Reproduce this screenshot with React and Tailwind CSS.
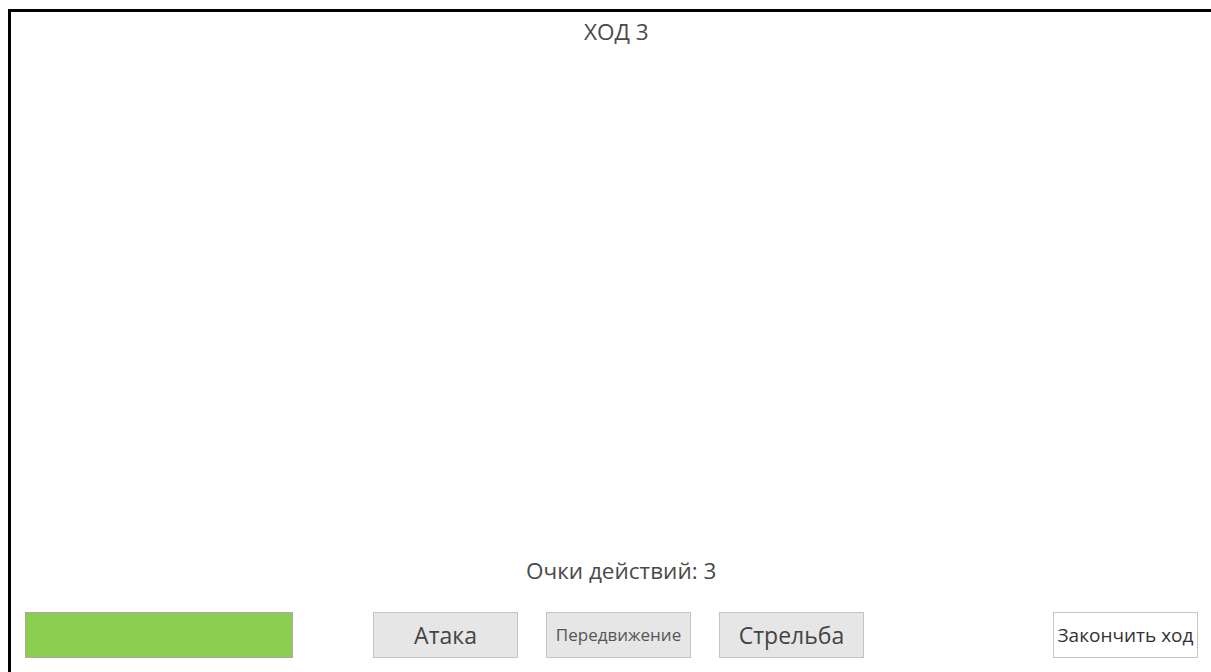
export default function App() {
  const font = { fontFamily: '"Open Sans", "Noto Sans", sans-serif' };

  return (
    <div className="w-[1211px] h-[672px] overflow-hidden bg-white" style={font}>
      <div className="ml-[8px] mt-[9px] h-[663px] border-l-[3px] border-t-[3px] border-black flex flex-col">
        {/* Turn header */}
        <div className="pt-[5px] pl-[573px] text-[22.5px] leading-[30px] text-[#4a4a4a]">ХОД 3</div>

        <div className="flex-1" />

        {/* Action points */}
        <div className="pl-[515px] text-[22.5px] leading-[30px] text-[#4a4a4a]">Очки действий: 3</div>

        {/* Bottom controls */}
        <div className="flex items-center mt-[26px] mb-[14px] pl-[14px]">
          <div className="w-[268px] h-[46px] bg-[#8ccf50] border border-[#a8a8a8]" />
          <button className="ml-[80px] w-[145px] h-[46px] bg-[#e6e6e6] border border-[#c4c4c4] text-[23px] text-[#444]">
            Атака
          </button>
          <button className="ml-[28px] w-[145px] h-[46px] bg-[#e6e6e6] border border-[#c4c4c4] text-[17px] text-[#555] whitespace-nowrap overflow-hidden">
            Передвижение
          </button>
          <button className="ml-[28px] w-[145px] h-[46px] bg-[#e6e6e6] border border-[#c4c4c4] text-[23px] text-[#444]">
            Стрельба
          </button>
          <button className="ml-[189px] w-[145px] h-[46px] bg-white border border-[#c4c4c4] text-[19px] text-[#333] whitespace-nowrap overflow-hidden">
            Закончить ход
          </button>
        </div>
      </div>
    </div>
  );
}
